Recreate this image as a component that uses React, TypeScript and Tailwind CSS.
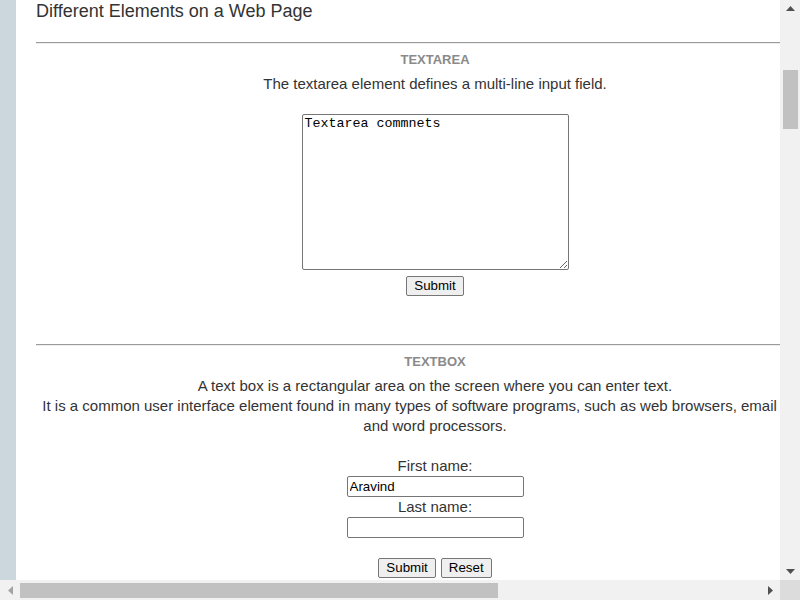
import React from 'react';

function VScrollbar() {
    return (
        <div className="w-5 shrink-0 bg-[#f1f1f1] flex flex-col items-center">
            <div className="h-[17px] w-full flex items-center justify-center">
                <svg width="9" height="5" viewBox="0 0 9 5"><polygon points="4.5,0 9,5 0,5" fill="#505050" /></svg>
            </div>
            <div className="h-[53px]" />
            <div className="h-[59px] w-[15px] bg-[#c1c1c1]" />
            <div className="flex-1" />
            <div className="h-[17px] w-full flex items-center justify-center">
                <svg width="9" height="5" viewBox="0 0 9 5"><polygon points="0,0 9,0 4.5,5" fill="#505050" /></svg>
            </div>
        </div>
    );
}

function HScrollbar() {
    return (
        <div className="h-5 shrink-0 flex">
            <div className="flex-1 bg-[#f1f1f1] flex items-center">
                <div className="w-5 h-full flex items-center justify-center">
                    <svg width="5" height="9" viewBox="0 0 5 9"><polygon points="5,0 5,9 0,4.5" fill="#a3a3a3" /></svg>
                </div>
                <div className="w-[478px] h-[15px] bg-[#c1c1c1]" />
                <div className="flex-1" />
                <div className="w-5 h-full flex items-center justify-center">
                    <svg width="5" height="9" viewBox="0 0 5 9"><polygon points="0,0 5,4.5 0,9" fill="#505050" /></svg>
                </div>
            </div>
            <div className="w-5 bg-[#dcdcdc]" />
        </div>
    );
}

function Rule() {
    return <div className="border-t border-[#9a9a9a] border-b border-b-[#eeeeee] h-[2px]" />;
}

function SectionTitle({ children }: { children: React.ReactNode }) {
    return <div className="text-[13px] leading-[16px] font-bold text-[#8a8a8a] text-center">{children}</div>;
}

function NativeButton({ children }: { children: React.ReactNode }) {
    return (
        <button className="h-5 px-[7px] text-[13.33px] leading-[16px] text-black bg-[#efefef] border border-[#767676] rounded-[2px]">
            {children}
        </button>
    );
}

export default function App() {
    return (
        <div className="w-[800px] h-[600px] flex flex-col overflow-hidden bg-white font-['Liberation_Sans',Arial,sans-serif]">
            <div className="flex flex-1 min-h-0">
                <div className="flex-1 min-w-0 overflow-hidden flex">
                    <div className="w-4 shrink-0 bg-[#ccd6dd]" />
                    <div className="w-[798px] shrink-0 ml-5 text-[#333]">
                        <h1 className="text-[18px] leading-[22px] font-normal">Different Elements on a Web Page</h1>

                        <div className="mt-5"><Rule /></div>
                        <div className="mt-[8px]"><SectionTitle>TEXTAREA</SectionTitle></div>
                        <p className="mt-[6px] text-[15px] leading-[20px] text-center">The textarea element defines a multi-line input field.</p>
                        <div className="mt-5 flex flex-col items-center">
                            <textarea
                                defaultValue="Textarea commnets"
                                className="w-[267px] h-[156px] border border-[#767676] rounded-[2px] px-[2px] py-[1px] text-[13.33px] leading-[16px] text-black font-['Liberation_Mono',monospace] resize-y outline-none"
                            />
                            <div className="mt-[6px] flex"><NativeButton>Submit</NativeButton></div>
                        </div>

                        <div className="mt-[48px]"><Rule /></div>
                        <div className="mt-[8px]"><SectionTitle>TEXTBOX</SectionTitle></div>
                        <p className="mt-[6px] text-[15px] leading-[20px] text-center">
                            A text box is a rectangular area on the screen where you can enter text.<br />
                            It is a common user interface element found in many types of software programs, such as web browsers, email clients, and word processors.
                        </p>
                        <form className="mt-5 flex flex-col items-center text-[15px] leading-[20px]">
                            <label>First name:</label>
                            <input defaultValue="Aravind" className="w-[177px] h-[21px] border border-[#767676] rounded-[2px] px-[2px] text-[13.33px] text-black outline-none" />
                            <label>Last name:</label>
                            <input className="w-[177px] h-[21px] border border-[#767676] rounded-[2px] px-[2px] text-[13.33px] text-black outline-none" />
                            <div className="mt-5 flex gap-[5px]">
                                <NativeButton>Submit</NativeButton>
                                <NativeButton>Reset</NativeButton>
                            </div>
                        </form>
                    </div>
                </div>
                <VScrollbar />
            </div>
            <HScrollbar />
        </div>
    );
}
